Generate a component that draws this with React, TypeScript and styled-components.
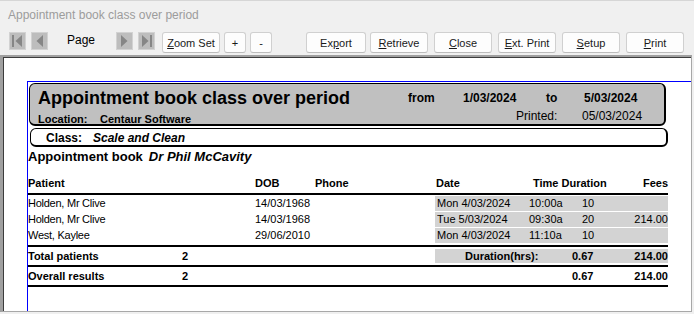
import React from 'react';
import styled, { createGlobalStyle } from 'styled-components';

const Global = createGlobalStyle`
  html, body { margin: 0; padding: 0; }
  body {
    width: 694px; height: 314px; overflow: hidden;
    background: #f0f0f0;
    font-family: "Liberation Sans", Arial, sans-serif;
  }
`;

const Window = styled.div`
  width: 694px;
  height: 314px;
  box-sizing: border-box;
  display: flex;
  flex-direction: column;
  background: #f0f0f0;
  border-top: 1px solid #d6d6d6;
`;

const TitleBar = styled.div`
  height: 27px;
  display: flex;
  align-items: center;
  padding-left: 8px;
  font-size: 12px;
  color: #9c9c9c;
  flex: none;
`;

const Toolbar = styled.div`
  height: 27px;
  box-sizing: border-box;
  padding: 4px 0 0 9px;
  display: flex;
  align-items: flex-start;
  flex: none;
`;

const NavIcon = styled.svg<{ $gap?: number }>`
  width: 17px;
  height: 18px;
  margin-left: ${p => p.$gap ?? 0}px;
  display: block;
`;

const PageLabel = styled.span`
  width: 35px;
  margin-left: 19px;
  margin-right: 14px;
  font-size: 12px;
  line-height: 15px;
  color: #000;
  padding-top: 1px;
`;

const ToolButton = styled.div<{ $w: number; $gap: number }>`
  width: ${p => p.$w}px;
  height: 21px;
  box-sizing: border-box;
  margin-left: ${p => p.$gap}px;
  border: 1px solid #d0d0d0;
  border-bottom-color: #bcbcbc;
  border-radius: 3px;
  background: #fdfdfd;
  display: flex;
  align-items: center;
  justify-content: center;
  font-size: 11px;
  color: #1a1a1a;
  u { text-decoration: underline; text-underline-offset: 1px; }
`;

const Panel = styled.div`
  flex: 1;
  margin: 0 2px 2px 0;
  border-top: 2px solid #a0a0a0;
  border-left: 3px solid #a0a0a0;
  border-right: 1px solid #a8a8a8;
  border-bottom: 1px solid #a8a8a8;
  box-shadow: inset 1px 1px 0 #3c3c3c;
  background: #fff;
  padding: 24px 0 0 24px;
  display: flex;
  flex-direction: column;
  overflow: hidden;
`;

const Page = styled.div`
  flex: 1;
  border-top: 1px solid #0000ff;
  border-left: 1px solid #0000ff;
`;

const Report = styled.div`
  width: 640px;
  color: #000;
`;

const HeaderBox = styled.div`
  margin: 1px 0 0 1px;
  width: 637px;
  height: 43px;
  box-sizing: border-box;
  background: #c0c0c0;
  border: 1px solid #000;
  border-right-width: 2px;
  border-bottom-width: 2px;
  border-radius: 6px;
  padding: 4px 0 0 8px;
`;

const HeaderLine = styled.div`
  display: flex;
  align-items: flex-start;
  height: 20px;
`;

const ReportTitle = styled.span`
  width: 370px;
  font-size: 18px;
  font-weight: bold;
  line-height: 20px;
`;

const HeadCell = styled.span<{ $w?: number; $bold?: boolean; $top?: number; $size?: number }>`
  ${p => (p.$w ? `width: ${p.$w}px;` : '')}
  font-size: ${p => p.$size ?? 12}px;
  font-weight: ${p => (p.$bold ? 'bold' : 'normal')};
  line-height: 14px;
  padding-top: ${p => p.$top ?? 0}px;
  white-space: nowrap;
`;

const ClassBox = styled.div`
  margin: 2px 0 0 2px;
  width: 638px;
  height: 19px;
  box-sizing: border-box;
  border: 1px solid #000;
  border-right-width: 2px;
  border-bottom-width: 2px;
  border-radius: 6px;
  background: #fff;
  padding: 2px 0 0 15px;
  display: flex;
  font-size: 12px;
  line-height: 14px;
`;

const ClassLabel = styled.span`
  width: 47px;
  font-weight: bold;
`;

const ClassValue = styled.span`
  font-weight: bold;
  font-style: italic;
`;

const BookTitle = styled.div`
  margin-top: 2px;
  height: 15px;
  font-size: 13px;
  line-height: 15px;
  font-weight: bold;
  em { margin-left: 6px; }
`;

const ColumnHeader = styled.div`
  margin-top: 13px;
  padding-bottom: 3px;
  border-bottom: 2px solid #000;
  display: grid;
  grid-template-columns: 227px 60px 121px 97px 1fr auto;
  font-size: 11px;
  line-height: 13px;
  font-weight: bold;
`;

const DataRows = styled.div`
  padding-top: 1px;
  padding-bottom: 1px;
  border-bottom: 2px solid #000;
`;

const DataRow = styled.div`
  display: grid;
  grid-template-columns: 227px 180px 1fr;
  height: 16px;
  font-size: 11px;
  line-height: 15px;
`;

const PatientName = styled.span`
  letter-spacing: -0.25px;
`;

const ApptBlock = styled.div`
  display: grid;
  grid-template-columns: 92px 53px 1fr auto;
  padding-left: 2px;
  height: 15px;
  background: #d3d3d3;
`;

const Right = styled.span`
  text-align: right;
`;

const TotalRow = styled.div`
  display: grid;
  grid-template-columns: 154px 253px 1fr;
  align-items: center;
  height: 18px;
  border-bottom: 2px solid #000;
  font-size: 11px;
  line-height: 14px;
  font-weight: bold;
`;

const TotalBlock = styled.div<{ $shaded?: boolean }>`
  display: grid;
  grid-template-columns: 137px 1fr auto;
  height: 14px;
  background: ${p => (p.$shaded ? '#d3d3d3' : 'transparent')};
`;

const TotalLabel = styled.span`
  padding-left: 30px;
`;

const First = () => (
  <NavIcon viewBox="0 0 17 18">
    <rect x="0.5" y="0.5" width="16" height="17" fill="#bdbdbd" stroke="#d2d2d2" />
    <rect x="3" y="3" width="2" height="12" fill="#868686" />
    <polygon points="13,3 13,15 6.5,9" fill="#868686" />
  </NavIcon>
);
const Prev = ({ gap }: { gap: number }) => (
  <NavIcon viewBox="0 0 17 18" $gap={gap}>
    <rect x="0.5" y="0.5" width="16" height="17" fill="#bdbdbd" stroke="#d2d2d2" />
    <polygon points="12,3 12,15 5.5,9" fill="#868686" />
  </NavIcon>
);
const Next = () => (
  <NavIcon viewBox="0 0 17 18">
    <rect x="0.5" y="0.5" width="16" height="17" fill="#bdbdbd" stroke="#d2d2d2" />
    <polygon points="5,3 5,15 11.5,9" fill="#868686" />
  </NavIcon>
);
const Last = ({ gap }: { gap: number }) => (
  <NavIcon viewBox="0 0 17 18" $gap={gap}>
    <rect x="0.5" y="0.5" width="16" height="17" fill="#bdbdbd" stroke="#d2d2d2" />
    <polygon points="4,3 4,15 10.5,9" fill="#868686" />
    <rect x="12" y="3" width="2" height="12" fill="#868686" />
  </NavIcon>
);

const rows = [
  { name: 'Holden, Mr Clive', dob: '14/03/1968', date: 'Mon 4/03/2024', time: '10:00a', dur: '10', fee: '' },
  { name: 'Holden, Mr Clive', dob: '14/03/1968', date: 'Tue 5/03/2024', time: '09:30a', dur: '20', fee: '214.00' },
  { name: 'West, Kaylee', dob: '29/06/2010', date: 'Mon 4/03/2024', time: '11:10a', dur: '10', fee: '' },
];

export default function App() {
  return (
    <>
      <Global />
      <Window>
        <TitleBar>Appointment book class over period</TitleBar>
        <Toolbar>
          <First />
          <Prev gap={5} />
          <PageLabel>Page</PageLabel>
          <Next />
          <Last gap={5} />
          <ToolButton $w={58} $gap={7}><u>Z</u>oom Set</ToolButton>
          <ToolButton $w={22} $gap={4}>+</ToolButton>
          <ToolButton $w={22} $gap={4}>-</ToolButton>
          <ToolButton $w={60} $gap={34}>Ex<u>p</u>ort</ToolButton>
          <ToolButton $w={58} $gap={4}><u>R</u>etrieve</ToolButton>
          <ToolButton $w={58} $gap={6}><u>C</u>lose</ToolButton>
          <ToolButton $w={58} $gap={6}><u>E</u>xt. Print</ToolButton>
          <ToolButton $w={58} $gap={6}><u>S</u>etup</ToolButton>
          <ToolButton $w={58} $gap={6}><u>P</u>rint</ToolButton>
        </Toolbar>
        <Panel>
          <Page>
            <Report>
              <HeaderBox>
                <HeaderLine>
                  <ReportTitle>Appointment book class over period</ReportTitle>
                  <HeadCell $w={55} $bold $top={3}>from</HeadCell>
                  <HeadCell $w={83} $bold $top={3}>1/03/2024</HeadCell>
                  <HeadCell $w={38} $bold $top={3}>to</HeadCell>
                  <HeadCell $bold $top={3}>5/03/2024</HeadCell>
                </HeaderLine>
                <HeaderLine>
                  <HeadCell $w={62} $bold $size={11} $top={4}>Location:</HeadCell>
                  <HeadCell $w={416} $bold $size={11} $top={4}>Centaur Software</HeadCell>
                  <HeadCell $w={66} $top={1}>Printed:</HeadCell>
                  <HeadCell $top={1}>05/03/2024</HeadCell>
                </HeaderLine>
              </HeaderBox>
              <ClassBox>
                <ClassLabel>Class:</ClassLabel>
                <ClassValue>Scale and Clean</ClassValue>
              </ClassBox>
              <BookTitle>
                Appointment book<em>Dr Phil McCavity</em>
              </BookTitle>
              <ColumnHeader>
                <span>Patient</span>
                <span>DOB</span>
                <span>Phone</span>
                <span>Date</span>
                <span>Time Duration</span>
                <Right>Fees</Right>
              </ColumnHeader>
              <DataRows>
                {rows.map((r, i) => (
                  <DataRow key={i}>
                    <PatientName>{r.name}</PatientName>
                    <span>{r.dob}</span>
                    <ApptBlock>
                      <span>{r.date}</span>
                      <span>{r.time}</span>
                      <span>{r.dur}</span>
                      <Right>{r.fee}</Right>
                    </ApptBlock>
                  </DataRow>
                ))}
              </DataRows>
              <TotalRow>
                <span>Total patients</span>
                <span>2</span>
                <TotalBlock $shaded>
                  <TotalLabel>Duration(hrs):</TotalLabel>
                  <span>0.67</span>
                  <Right>214.00</Right>
                </TotalBlock>
              </TotalRow>
              <TotalRow>
                <span>Overall results</span>
                <span>2</span>
                <TotalBlock>
                  <span />
                  <span>0.67</span>
                  <Right>214.00</Right>
                </TotalBlock>
              </TotalRow>
            </Report>
          </Page>
        </Panel>
      </Window>
    </>
  );
}
